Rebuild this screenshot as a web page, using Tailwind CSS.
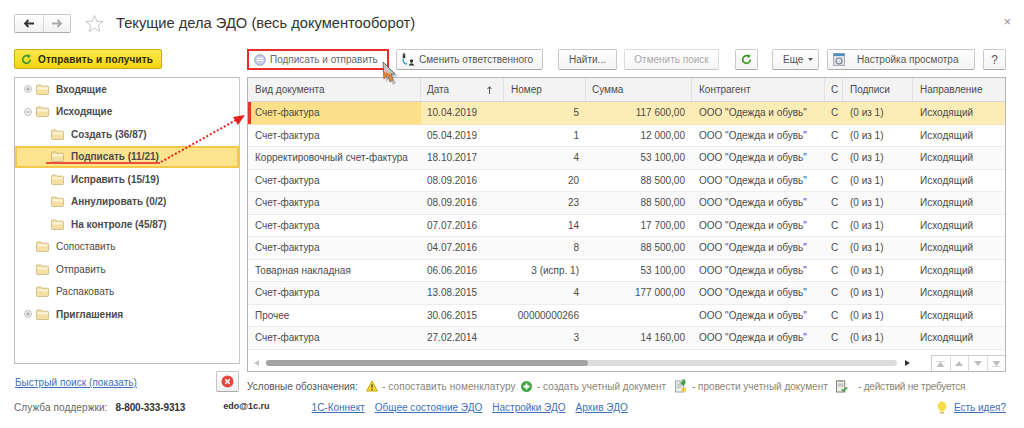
<!DOCTYPE html>
<html lang="ru"><head><meta charset="utf-8">
<script src="https://cdn.jsdelivr.net/npm/@tailwindcss/browser@4"></script>
</head>
<body class="bg-white">
<svg width="0" height="0" class="absolute">
<defs>
<symbol id="folder" viewBox="0 0 13 11"><path d="M.5 2 Q.5 1 1.500 1 H5 L6 2.200 H11.500 Q12.500 2.200 12.500 3.200 V9.500 Q12.500 10.500 11.500 10.500 H1.500 Q.5 10.500 .5 9.500 Z" fill="#f5e0a3" stroke="#cdb275" stroke-width=".8"/><rect x="1.300" y="3.200" width="10.400" height="2.200" fill="#fdf4d8"/></symbol>
<symbol id="plus" viewBox="0 0 8 8"><circle cx="4" cy="4" r="3.500" fill="#f4f4f4" stroke="#b4b4b4" stroke-width=".8"/><path d="M2 4H6M4 2V6" stroke="#909090" stroke-width=".8"/></symbol>
<symbol id="minus" viewBox="0 0 8 8"><circle cx="4" cy="4" r="3.500" fill="#f4f4f4" stroke="#b4b4b4" stroke-width=".8"/><path d="M2 4H6" stroke="#909090" stroke-width=".8"/></symbol>
</defs>
</svg>
<div class="relative w-[1024px] h-[428px] overflow-hidden bg-white text-[10px] text-[#4b4b4b] font-['Liberation_Sans',Arial,sans-serif] pl-[14px] pt-[13px]">

<!-- header -->
<div class="flex items-center h-[20px] w-[992px]">
  <div class="flex h-[19px] w-[57px] rounded-[2px] border border-[#c9c9c9] border-b-[#a9a9a9] bg-gradient-to-b from-white to-[#f1f1f1]">
    <div class="w-[29px] flex items-center justify-center border-r border-[#d8d8d8]"><svg width="12" height="9" viewBox="0 0 12 9"><path d="M11 4.500H3M5.500 1 2 4.500 5.500 8" fill="none" stroke="#333" stroke-width="1.800"/></svg></div>
    <div class="flex-1 flex items-center justify-center"><svg width="12" height="9" viewBox="0 0 12 9"><path d="M1 4.500H9M6.500 1 10 4.500 6.500 8" fill="none" stroke="#a8a8a8" stroke-width="1.800"/></svg></div>
  </div>
  <svg class="ml-[14px]" width="19" height="19" viewBox="0 0 19 19"><path d="M9.500 1.500 11.800 7.200 18 7.600 13.200 11.500 14.800 17.500 9.500 14.200 4.200 17.500 5.800 11.500 1 7.600 7.200 7.200Z" fill="#fff" stroke="#c6c6c6"/></svg>
  <div class="ml-[12px] text-[14.7px] text-[#333] leading-[20px]">Текущие дела ЭДО (весь документооборот)</div>
  <div class="ml-auto text-[13px] text-[#8c8c8c] leading-none mr-[-5px] mb-[4px]">×</div>
</div>

<!-- main -->
<div class="flex mt-[16px]">
  <!-- left -->
  <div class="w-[226px] mr-[7px] shrink-0">
    <div class="w-[148px] h-[20px] rounded-[2px] border border-[#c9ad12] bg-gradient-to-b from-[#fbe94a] to-[#f3d500] flex items-center pl-[6px] font-bold text-[#2f2a00] tracking-[.15px]">
      <svg width="11" height="11" viewBox="0 0 11 11"><path d="M9.300 5.500A3.800 3.800 0 1 1 7.600 2.300" fill="none" stroke="#3f9a2c" stroke-width="1.700"/><path d="M6.200.2 9.800 1.600 7.400 4.400Z" fill="#3f9a2c"/></svg>
      <span class="ml-[6px]">Отправить и получить</span>
    </div>
    <div class="mt-[8px] h-[287px] border border-[#bdbdbd] border-r-[#c8c8c8] font-bold">
      <div class="h-[22.5px] flex items-center pl-[9px]"><svg width="8" height="8"><use href="#plus"/></svg><svg class="ml-[4px]" width="13" height="11"><use href="#folder"/></svg><span class="ml-[7px]">Входящие</span></div>
      <div class="h-[22.5px] flex items-center pl-[9px]"><svg width="8" height="8"><use href="#minus"/></svg><svg class="ml-[4px]" width="13" height="11"><use href="#folder"/></svg><span class="ml-[7px]">Исходящие</span></div>
      <div class="h-[22.5px] flex items-center pl-[36px]"><svg width="13" height="11"><use href="#folder"/></svg><span class="ml-[7px]">Создать (36/87)</span></div>
      <div class="h-[22.5px] flex items-center pl-[35px] bg-[#fde38e] outline-2 -outline-offset-2 outline-[#f5c84a]"><svg class="ml-[1px]" width="13" height="11"><use href="#folder"/></svg><span class="ml-[7px]">Подписать (11/21)</span></div>
      <div class="h-[22.5px] flex items-center pl-[36px]"><svg width="13" height="11"><use href="#folder"/></svg><span class="ml-[7px]">Исправить (15/19)</span></div>
      <div class="h-[22.5px] flex items-center pl-[36px]"><svg width="13" height="11"><use href="#folder"/></svg><span class="ml-[7px]">Аннулировать (0/2)</span></div>
      <div class="h-[22.5px] flex items-center pl-[36px]"><svg width="13" height="11"><use href="#folder"/></svg><span class="ml-[7px]">На контроле (45/87)</span></div>
      <div class="h-[22.5px] flex items-center pl-[21px] font-normal"><svg width="13" height="11"><use href="#folder"/></svg><span class="ml-[7px]">Сопоставить</span></div>
      <div class="h-[22.5px] flex items-center pl-[21px] font-normal"><svg width="13" height="11"><use href="#folder"/></svg><span class="ml-[7px]">Отправить</span></div>
      <div class="h-[22.5px] flex items-center pl-[21px] font-normal"><svg width="13" height="11"><use href="#folder"/></svg><span class="ml-[7px]">Распаковать</span></div>
      <div class="h-[22.5px] flex items-center pl-[9px]"><svg width="8" height="8"><use href="#plus"/></svg><svg class="ml-[4px]" width="13" height="11"><use href="#folder"/></svg><span class="ml-[7px]">Приглашения</span></div>
    </div>
    <div class="mt-[7px] flex items-start justify-between pl-[1px] pr-[1px]">
      <a class="mt-[4px] text-[#3d6fb8] underline underline-offset-1 tracking-[.06px]">Быстрый поиск (показать)</a>
      <div class="w-[23px] h-[21px] rounded-[2px] border border-[#c4c4c4] border-b-[#a8a8a8] bg-gradient-to-b from-white to-[#efefef] flex items-center justify-center"><svg width="13" height="13" viewBox="0 0 13 13"><circle cx="6.500" cy="6.500" r="6" fill="#e2483d"/><path d="M4.300 4.300 8.700 8.700M8.700 4.300 4.300 8.700" stroke="#fff" stroke-width="1.600"/></svg></div>
    </div>
  </div>

  <!-- right -->
  <div class="w-[759px]">
    <div class="flex h-[21px] items-stretch text-[#555]">
      <div class="w-[142px] border-2 border-[#ef2a2a] flex items-center pl-[5px] bg-white text-[#666]">
        <svg width="12" height="12" viewBox="0 0 12 12"><circle cx="6" cy="6" r="5.300" fill="#c9cfe6" stroke="#9aa3c4"/><path d="M3 4.500H9M3 6.500H9" stroke="#fff"/></svg>
        <span class="ml-[4px]">Подписать и отправить</span>
      </div>
      <div class="ml-[7px] w-[147px] flex items-center pl-[4px] rounded-[2px] border border-[#c9c9c9] border-b-[#a9a9a9] bg-gradient-to-b from-white to-[#f3f3f3]">
        <svg width="14" height="13" viewBox="0 0 14 13"><path d="M3 0V3M1.500 2H4.500" stroke="#333" stroke-width="1.200"/><circle cx="3" cy="4" r="1.400" fill="#333"/><path d="M2 6Q2 11 6 11" fill="none" stroke="#2f9ac4" stroke-width="1.400"/><circle cx="10.500" cy="8" r="1.700" fill="#333"/><path d="M7.500 12.500Q10.500 8 13.500 12.500Z" fill="#333"/></svg>
        <span class="ml-[4px]">Сменить ответственного</span>
      </div>
      <div class="ml-[15px] w-[59px] flex items-center justify-center rounded-[2px] border border-[#c9c9c9] border-b-[#a9a9a9] bg-gradient-to-b from-white to-[#f3f3f3]">Найти...</div>
      <div class="ml-[7px] w-[95px] flex items-center justify-center rounded-[2px] border border-[#dcdcdc] border-b-[#c4c4c4] bg-gradient-to-b from-white to-[#f5f5f5] text-[#a9a9a9]">Отменить поиск</div>
      <div class="ml-[16px] w-[23px] flex items-center justify-center rounded-[2px] border border-[#c9c9c9] border-b-[#a9a9a9] bg-gradient-to-b from-white to-[#f3f3f3]"><svg width="11" height="11" viewBox="0 0 11 11"><path d="M9.300 5.500A3.800 3.800 0 1 1 7.600 2.300" fill="none" stroke="#3f9a2c" stroke-width="1.700"/><path d="M6.200.2 9.800 1.600 7.400 4.400Z" fill="#3f9a2c"/></svg></div>
      <div class="ml-[14px] w-[47px] flex items-center pl-[10px] rounded-[2px] border border-[#c9c9c9] border-b-[#a9a9a9] bg-gradient-to-b from-white to-[#f3f3f3]">Еще<svg class="ml-[5px]" width="5" height="3" viewBox="0 0 5 3"><path d="M0 0H5L2.500 3Z" fill="#555"/></svg></div>
      <div class="ml-[8px] w-[148px] flex items-center pl-[5px] rounded-[2px] border border-[#c9c9c9] border-b-[#a9a9a9] bg-gradient-to-b from-white to-[#f3f3f3]">
        <svg width="12" height="13" viewBox="0 0 12 13"><rect x=".5" y=".5" width="11" height="12" fill="#dfe3e8" stroke="#a6adb6"/><rect x=".5" y=".5" width="11" height="2.500" fill="#4f8fc6"/><circle cx="6" cy="8" r="3" fill="none" stroke="#7f868e" stroke-width="1.200"/></svg>
        <span class="ml-[12px]">Настройка просмотра</span>
      </div>
      <div class="ml-[8px] w-[23px] flex items-center justify-center rounded-[2px] border border-[#c9c9c9] border-b-[#a9a9a9] bg-gradient-to-b from-white to-[#f3f3f3] text-[12px]">?</div>
    </div>

    <!-- table -->
    <div class="relative mt-[7px] h-[295px] border border-[#b5b5b5] text-[#4b4b4b]">
      <div class="grid grid-cols-[173px_83px_82px_106px_133px_18px_70px_92px] h-[24px] bg-[#f3f3f3] items-stretch border-b border-[#d4d4d4]">
        <div class="flex items-center pl-[7px] border-r border-[#e2e2e2]">Вид документа</div>
        <div class="flex items-center justify-between pl-[6px] pr-[11px] border-r border-[#e2e2e2]"><span>Дата</span><svg width="5" height="8" viewBox="0 0 5 8"><path d="M2.500 8V1M.5 3 2.500.7 4.500 3" fill="none" stroke="#555"/></svg></div>
        <div class="flex items-center pl-[7px] border-r border-[#e2e2e2]">Номер</div>
        <div class="flex items-center pl-[6px] border-r border-[#e2e2e2]">Сумма</div>
        <div class="flex items-center pl-[7px] border-r border-[#e2e2e2]">Контрагент</div>
        <div class="flex items-center pl-[6px] border-r border-[#e2e2e2]">С</div>
        <div class="flex items-center pl-[7px] border-r border-[#e2e2e2]">Подписи</div>
        <div class="flex items-center pl-[7px]">Направление</div>
      </div>

      <div class="relative grid grid-cols-[173px_83px_82px_106px_133px_18px_70px_92px] h-[22.5px] items-center bg-[#fcedb6] border-b border-[#f0e3b5]">
        <div class="absolute left-0 top-0 bottom-0 w-[3px] bg-[#e8352c]"></div>
        <div class="pl-[7px] h-full flex items-center bg-[#fde08a]">Счет-фактура</div><div class="pl-[6px]">10.04.2019</div><div class="pr-[7px] text-right">5</div><div class="pr-[7px] text-right">117 600,00</div><div class="pl-[7px] whitespace-nowrap">ООО "Одежда и обувь"</div><div class="pl-[6px]">С</div><div class="pl-[7px]">(0 из 1)</div><div class="pl-[7px]">Исходящий</div>
      </div>
      <div class="grid grid-cols-[173px_83px_82px_106px_133px_18px_70px_92px] h-[22.5px] items-center bg-white border-b border-[#ececec]">
        <div class="pl-[7px]">Счет-фактура</div><div class="pl-[6px]">05.04.2019</div><div class="pr-[7px] text-right">1</div><div class="pr-[7px] text-right">12 000,00</div><div class="pl-[7px] whitespace-nowrap">ООО "Одежда и обувь"</div><div class="pl-[6px]">С</div><div class="pl-[7px]">(0 из 1)</div><div class="pl-[7px]">Исходящий</div>
      </div>
      <div class="grid grid-cols-[173px_83px_82px_106px_133px_18px_70px_92px] h-[22.5px] items-center bg-[#fafafa] border-b border-[#ececec]">
        <div class="pl-[7px]">Корректировочный счет-фактура</div><div class="pl-[6px]">18.10.2017</div><div class="pr-[7px] text-right">4</div><div class="pr-[7px] text-right">53 100,00</div><div class="pl-[7px] whitespace-nowrap">ООО "Одежда и обувь"</div><div class="pl-[6px]">С</div><div class="pl-[7px]">(0 из 1)</div><div class="pl-[7px]">Исходящий</div>
      </div>
      <div class="grid grid-cols-[173px_83px_82px_106px_133px_18px_70px_92px] h-[22.5px] items-center bg-white border-b border-[#ececec]">
        <div class="pl-[7px]">Счет-фактура</div><div class="pl-[6px]">08.09.2016</div><div class="pr-[7px] text-right">20</div><div class="pr-[7px] text-right">88 500,00</div><div class="pl-[7px] whitespace-nowrap">ООО "Одежда и обувь"</div><div class="pl-[6px]">С</div><div class="pl-[7px]">(0 из 1)</div><div class="pl-[7px]">Исходящий</div>
      </div>
      <div class="grid grid-cols-[173px_83px_82px_106px_133px_18px_70px_92px] h-[22.5px] items-center bg-[#fafafa] border-b border-[#ececec]">
        <div class="pl-[7px]">Счет-фактура</div><div class="pl-[6px]">08.09.2016</div><div class="pr-[7px] text-right">23</div><div class="pr-[7px] text-right">88 500,00</div><div class="pl-[7px] whitespace-nowrap">ООО "Одежда и обувь"</div><div class="pl-[6px]">С</div><div class="pl-[7px]">(0 из 1)</div><div class="pl-[7px]">Исходящий</div>
      </div>
      <div class="grid grid-cols-[173px_83px_82px_106px_133px_18px_70px_92px] h-[22.5px] items-center bg-white border-b border-[#ececec]">
        <div class="pl-[7px]">Счет-фактура</div><div class="pl-[6px]">07.07.2016</div><div class="pr-[7px] text-right">14</div><div class="pr-[7px] text-right">17 700,00</div><div class="pl-[7px] whitespace-nowrap">ООО "Одежда и обувь"</div><div class="pl-[6px]">С</div><div class="pl-[7px]">(0 из 1)</div><div class="pl-[7px]">Исходящий</div>
      </div>
      <div class="grid grid-cols-[173px_83px_82px_106px_133px_18px_70px_92px] h-[22.5px] items-center bg-[#fafafa] border-b border-[#ececec]">
        <div class="pl-[7px]">Счет-фактура</div><div class="pl-[6px]">04.07.2016</div><div class="pr-[7px] text-right">8</div><div class="pr-[7px] text-right">88 500,00</div><div class="pl-[7px] whitespace-nowrap">ООО "Одежда и обувь"</div><div class="pl-[6px]">С</div><div class="pl-[7px]">(0 из 1)</div><div class="pl-[7px]">Исходящий</div>
      </div>
      <div class="grid grid-cols-[173px_83px_82px_106px_133px_18px_70px_92px] h-[22.5px] items-center bg-white border-b border-[#ececec]">
        <div class="pl-[7px]">Товарная накладная</div><div class="pl-[6px]">06.06.2016</div><div class="pr-[7px] text-right">3 (испр. 1)</div><div class="pr-[7px] text-right">53 100,00</div><div class="pl-[7px] whitespace-nowrap">ООО "Одежда и обувь"</div><div class="pl-[6px]">С</div><div class="pl-[7px]">(0 из 1)</div><div class="pl-[7px]">Исходящий</div>
      </div>
      <div class="grid grid-cols-[173px_83px_82px_106px_133px_18px_70px_92px] h-[22.5px] items-center bg-[#fafafa] border-b border-[#ececec]">
        <div class="pl-[7px]">Счет-фактура</div><div class="pl-[6px]">13.08.2015</div><div class="pr-[7px] text-right">4</div><div class="pr-[7px] text-right">177 000,00</div><div class="pl-[7px] whitespace-nowrap">ООО "Одежда и обувь"</div><div class="pl-[6px]">С</div><div class="pl-[7px]">(0 из 1)</div><div class="pl-[7px]">Исходящий</div>
      </div>
      <div class="grid grid-cols-[173px_83px_82px_106px_133px_18px_70px_92px] h-[22.5px] items-center bg-white border-b border-[#ececec]">
        <div class="pl-[7px]">Прочее</div><div class="pl-[6px]">30.06.2015</div><div class="pr-[7px] text-right">00000000266</div><div class="pr-[7px] text-right"></div><div class="pl-[7px] whitespace-nowrap">ООО "Одежда и обувь"</div><div class="pl-[6px]">С</div><div class="pl-[7px]">(0 из 1)</div><div class="pl-[7px]">Исходящий</div>
      </div>
      <div class="grid grid-cols-[173px_83px_82px_106px_133px_18px_70px_92px] h-[22.5px] items-center bg-[#fafafa] border-b border-[#ececec]">
        <div class="pl-[7px]">Счет-фактура</div><div class="pl-[6px]">27.02.2014</div><div class="pr-[7px] text-right">3</div><div class="pr-[7px] text-right">14 160,00</div><div class="pl-[7px] whitespace-nowrap">ООО "Одежда и обувь"</div><div class="pl-[6px]">С</div><div class="pl-[7px]">(0 из 1)</div><div class="pl-[7px]">Исходящий</div>
      </div>

      <!-- scrollbar -->
      <div class="absolute left-0 right-0 bottom-0 h-[22px] flex items-end">
        <div class="flex items-center h-[16px] w-[680px]">
          <svg class="ml-[6px]" width="5" height="6" viewBox="0 0 5 6"><path d="M5 0V6L0 3Z" fill="#c4c4c4"/></svg>
          <div class="ml-[7px] w-[631px] h-[6px] rounded-full bg-[#dcdcdc]"><div class="w-[322px] h-[6px] rounded-full bg-[#a3a3a3]"></div></div>
          <svg class="ml-[8px]" width="5" height="6" viewBox="0 0 5 6"><path d="M0 0V6L5 3Z" fill="#333"/></svg>
        </div>
        <div class="ml-auto w-[74px] h-[16px] flex border-t border-l border-[#cfcfcf] bg-white">
          <div class="flex-1 flex items-center justify-center border-r border-[#dcdcdc]"><svg width="9" height="6" viewBox="0 0 9 6"><path d="M0 .5H9M4.500 1 8 6H1Z" fill="#bdbdbd" stroke="#bdbdbd" stroke-width=".6"/></svg></div>
          <div class="flex-1 flex items-center justify-center border-r border-[#dcdcdc]"><svg width="8" height="5" viewBox="0 0 8 5"><path d="M4 0 8 5H0Z" fill="#bdbdbd"/></svg></div>
          <div class="flex-1 flex items-center justify-center border-r border-[#dcdcdc]"><svg width="8" height="5" viewBox="0 0 8 5"><path d="M0 0H8L4 5Z" fill="#bdbdbd"/></svg></div>
          <div class="flex-1 flex items-center justify-center"><svg width="9" height="6" viewBox="0 0 9 6"><path d="M0 5.500H9M1 0H8L4.500 5Z" fill="#bdbdbd" stroke="#bdbdbd" stroke-width=".6"/></svg></div>
        </div>
      </div>
    </div>

    <!-- legend -->
    <div class="flex items-center h-[16px] mt-[6px] text-[#8a8578] whitespace-nowrap">
      <span class="text-[#555] w-[110px]">Условные обозначения:</span>
      <svg class="ml-[9px]" width="12" height="12" viewBox="0 0 13 12"><path d="M6.500 .5 12.500 11.500H.5Z" fill="#f4d431" stroke="#c9a818" stroke-linejoin="round"/><path d="M6.500 4V8M6.500 9V10.500" stroke="#333" stroke-width="1.200"/></svg>
      <span class="ml-[4px] w-[130px] tracking-[.1px]">- сопоставить номенклатуру</span>
      <svg class="ml-[9px]" width="11" height="11" viewBox="0 0 11 11"><circle cx="5.500" cy="5.500" r="5.500" fill="#43a548"/><path d="M2.500 5.500H8.500M5.500 2.500V8.500" stroke="#fff" stroke-width="1.800"/></svg>
      <span class="ml-[5px] w-[130px]">- создать учетный документ</span>
      <svg class="ml-[8px]" width="12" height="14" viewBox="0 0 13 14"><rect x=".5" y="1.500" width="9" height="12" fill="#eef0ee" stroke="#9aa29a"/><path d="M2 5H8M2 7H8M2 9H6" stroke="#a8b0a8"/><path d="M6 3H9V0H12V3H13L10 7Z" transform="translate(-1 0)" fill="#3e9a45"/><rect x="7" y="9" width="5" height="4" fill="#efc94c"/></svg>
      <span class="ml-[5px] w-[135px]">- провести учетный документ</span>
      <svg class="ml-[9px]" width="12" height="14" viewBox="0 0 13 14"><rect x=".5" y="1.500" width="9" height="12" fill="#f2f2ee" stroke="#7a7468"/><rect x="3" y=".5" width="4" height="2" fill="#a09a8c"/><path d="M2 5H8M2 7H8" stroke="#a0a0a0"/><path d="M6 10.500 8 12.500 12 8.500" fill="none" stroke="#3e9a45" stroke-width="1.600"/></svg>
      <span class="ml-[10px] tracking-[-.2px]">- действий не требуется</span>
    </div>
  </div>
</div>

<!-- footer -->
<div class="absolute left-[14px] top-[399px] w-[992px] h-[16px] flex items-center whitespace-nowrap">
  <span class="text-[#666] tracking-[.1px]">Служба поддержки:</span>
  <span class="ml-[8px] font-bold text-[#333] tracking-[-.1px]">8-800-333-9313</span>
  <span class="ml-[38px] font-bold text-[#333] text-[9px]">edo@1c.ru</span>
  <a class="ml-[42px] text-[#3d6fb8] underline underline-offset-1">1С-Коннект</a>
  <a class="ml-[10px] text-[#3d6fb8] underline underline-offset-1">Общее состояние ЭДО</a>
  <a class="ml-[10px] text-[#3d6fb8] underline underline-offset-1">Настройки ЭДО</a>
  <a class="ml-[10px] text-[#3d6fb8] underline underline-offset-1">Архив ЭДО</a>
  <svg class="ml-auto" width="10" height="13" viewBox="0 0 11 14"><path d="M5.500 .5A5 5 0 0 1 8 9.700V11.500H3V9.700A5 5 0 0 1 5.500 .5Z" fill="#f6dc4a"/><rect x="3.500" y="12" width="4" height="1.600" fill="#c9b36a"/></svg>
  <a class="ml-[7px] text-[#3d6fb8] underline underline-offset-1">Есть идея?</a>
</div>

<!-- annotations -->
<svg class="absolute left-0 top-0 pointer-events-none" width="1024" height="428" viewBox="0 0 1024 428">
  <path d="M46 163H160" stroke="#e5201c" stroke-width="1.500"/>
  <path d="M161 162 236 120" stroke="#e5201c" stroke-width="2" stroke-dasharray="2 2" fill="none"/>
  <path d="M245 115 233 117 238 125Z" fill="#e5201c"/>
  <path d="M385 64 386 82 390 78 393 85 396 83 393 77 398 76Z" fill="#555" opacity=".35"/>
  <path d="M383 62 384 79 388 75 390 82 393 80 391 74 395 74Z" fill="#c9c5bd" stroke="#55504a" stroke-width=".8"/>
  <path d="M384 72 384 79 388 75 390 82 393 80 391 74Z" fill="#e0813a"/>
</svg>
</div>
</body></html>
